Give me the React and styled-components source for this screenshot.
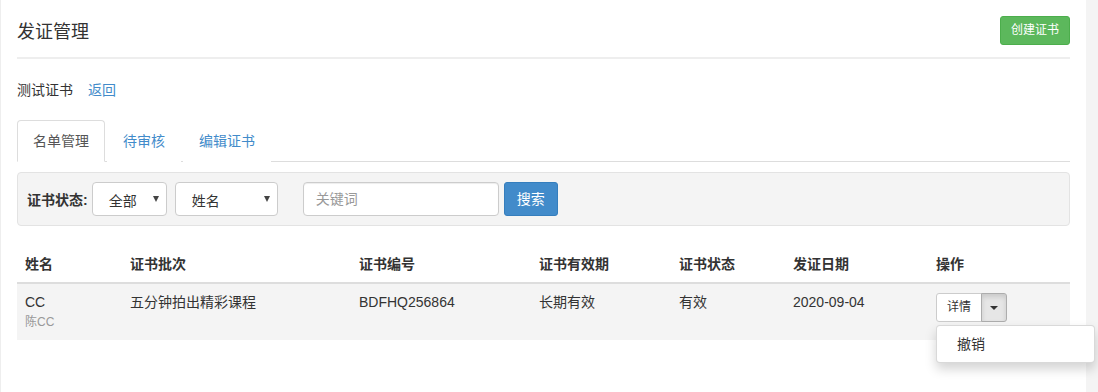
import React from "react";
import styled, { createGlobalStyle } from "styled-components";

const Global = createGlobalStyle`
  html, body {
    margin: 0;
    padding: 0;
    background: #fff;
  }
  body {
    font-family: "Liberation Sans", "Noto Sans CJK SC", sans-serif;
    font-size: 14px;
    color: #333;
  }
  * {
    box-sizing: border-box;
  }
`;

const Page = styled.div`
  display: flex;
  min-height: 392px;
  border-left: 1px solid #eee;
`;

const Main = styled.div`
  flex: 1;
  min-width: 0;
  padding: 16px 16px 0 16px;
`;

const Strip = styled.div`
  width: 12px;
  flex-shrink: 0;
  background: #f4f4f4;
`;

const Header = styled.div`
  display: flex;
  align-items: center;
  justify-content: space-between;
  padding-bottom: 12px;
  border-bottom: 2px solid #eee;
`;

const Title = styled.h1`
  margin: 0;
  padding-top: 3px;
  font-size: 18px;
  font-weight: normal;
  line-height: 26px;
  color: #333;
`;

const Button = styled.button`
  font-family: inherit;
  font-size: ${p => (p.small ? "12px" : "14px")};
  line-height: ${p => (p.small ? "17px" : "20px")};
  padding: ${p => (p.small ? "5px 10px" : "6px 12px")};
  border-radius: 3px;
  border: 1px solid ${p => p.border};
  background: ${p => p.bg};
  color: ${p => p.color};
  cursor: pointer;
`;

const Crumb = styled.div`
  margin-top: 21px;
  line-height: 20px;
  font-size: 14px;
  display: flex;
  gap: 15px;
`;

const Link = styled.a`
  color: #428bca;
  text-decoration: none;
`;

const Tabs = styled.ul`
  display: flex;
  margin: 20px 0 0;
  padding: 0;
  list-style: none;
  border-bottom: 1px solid #ddd;
`;

const Tab = styled.li`
  margin-right: 2px;
  margin-bottom: -1px;
  padding: 10px 15px;
  line-height: 20px;
  border: 1px solid ${p => (p.active ? "#ddd" : "transparent")};
  border-bottom-color: ${p => (p.active ? "#fff" : "transparent")};
  border-radius: 4px 4px 0 0;
  background: #fff;
  color: ${p => (p.active ? "#555" : "#428bca")};
  cursor: pointer;
`;

const FilterBar = styled.div`
  margin-top: 10px;
  display: flex;
  align-items: center;
  padding: 9px;
  background: #f4f4f4;
  border: 1px solid #e3e3e3;
  border-radius: 4px;
`;

const Label = styled.label`
  font-weight: bold;
  margin-right: 4px;
`;

const Select = styled.div`
  width: ${p => p.w}px;
  height: 34px;
  margin-right: ${p => p.gap}px;
  padding: 2px 7px 0 16px;
  display: flex;
  align-items: center;
  justify-content: space-between;
  background: #fff;
  border: 1px solid #ccc;
  border-radius: 4px;
  color: #333;
`;

const Arrow = styled.span`
  width: 0;
  height: 0;
  margin-top: -2px;
  border-left: 3.5px solid transparent;
  border-right: 3.5px solid transparent;
  border-top: 6px solid #444;
`;

const Input = styled.input`
  width: 196px;
  height: 34px;
  padding: 6px 12px;
  font-family: inherit;
  font-size: 14px;
  border: 1px solid #ccc;
  border-radius: 4px;
  box-shadow: inset 0 1px 1px rgba(0, 0, 0, 0.075);
  margin-right: 5px;
  &::placeholder {
    color: #999;
  }
`;

const Table = styled.table`
  margin-top: 20px;
  width: 100%;
  border-collapse: collapse;
  table-layout: fixed;
`;

const Th = styled.th`
  width: ${p => p.w}px;
  text-align: left;
  padding: 8px;
  line-height: 20px;
  font-weight: bold;
  border-bottom: 2px solid #ddd;
`;

const Td = styled.td`
  padding: 8px;
  vertical-align: top;
  line-height: 20px;
  background: #f4f4f4;
`;

const Sub = styled.div`
  font-size: 12px;
  color: #999;
`;

const Group = styled.div`
  position: relative;
  display: inline-flex;
  margin-top: 1px;
`;

const GroupBtn = styled.button`
  font-family: inherit;
  font-size: 12px;
  line-height: 17px;
  padding: 5px ${p => (p.toggle ? "8px" : "10px")};
  border: 1px solid ${p => (p.toggle ? "#adadad" : "#ccc")};
  background: ${p => (p.toggle ? "#e6e6e6" : "#fff")};
  color: #333;
  border-radius: ${p => (p.toggle ? "0 3px 3px 0" : "3px 0 0 3px")};
  margin-left: ${p => (p.toggle ? "-1px" : "0")};
  box-shadow: ${p => (p.toggle ? "inset 0 3px 5px rgba(0,0,0,.125)" : "none")};
  display: flex;
  align-items: center;
`;

const Caret = styled.span`
  width: 0;
  height: 0;
  border-left: 4px solid transparent;
  border-right: 4px solid transparent;
  border-top: 4px solid #333;
`;

const Menu = styled.ul`
  position: absolute;
  top: 100%;
  left: 0;
  z-index: 10;
  width: 159px;
  margin: 3px 0 0;
  padding: 5px 0;
  list-style: none;
  background: #fff;
  border: 1px solid rgba(0, 0, 0, 0.15);
  border-radius: 4px;
  box-shadow: 0 6px 12px rgba(0, 0, 0, 0.175);
`;

const MenuItem = styled.li`
  padding: 3px 20px;
  line-height: 20px;
  color: #333;
  white-space: nowrap;
`;

const columns = [
  { title: "姓名", w: 105 },
  { title: "证书批次", w: 229 },
  { title: "证书编号", w: 180 },
  { title: "证书有效期", w: 140 },
  { title: "证书状态", w: 114 },
  { title: "发证日期", w: 143 },
  { title: "操作", w: 142 }
];

const rows = [
  {
    name: "CC",
    realName: "陈CC",
    batch: "五分钟拍出精彩课程",
    code: "BDFHQ256864",
    period: "长期有效",
    status: "有效",
    date: "2020-09-04"
  }
];

export default function App() {
  return (
    <>
      <Global />
      <Page>
        <Main>
          <Header>
            <Title>发证管理</Title>
            <Button small bg="#5cb85c" border="#4cae4c" color="#fff">
              创建证书
            </Button>
          </Header>

          <Crumb>
            <span>测试证书</span>
            <Link href="#">返回</Link>
          </Crumb>

          <Tabs>
            <Tab active>名单管理</Tab>
            <Tab>待审核</Tab>
            <Tab>编辑证书</Tab>
          </Tabs>

          <FilterBar>
            <Label>证书状态:</Label>
            <Select w={75} gap={8}>
              全部
              <Arrow />
            </Select>
            <Select w={103} gap={25}>
              姓名
              <Arrow />
            </Select>
            <Input placeholder="关键词" />
            <Button bg="#428bca" border="#357ebd" color="#fff">
              搜索
            </Button>
          </FilterBar>

          <Table>
            <thead>
              <tr>
                {columns.map(c => (
                  <Th key={c.title} w={c.w}>
                    {c.title}
                  </Th>
                ))}
              </tr>
            </thead>
            <tbody>
              {rows.map(r => (
                <tr key={r.code}>
                  <Td>
                    {r.name}
                    <Sub>{r.realName}</Sub>
                  </Td>
                  <Td>{r.batch}</Td>
                  <Td>{r.code}</Td>
                  <Td>{r.period}</Td>
                  <Td>{r.status}</Td>
                  <Td>{r.date}</Td>
                  <Td>
                    <Group>
                      <GroupBtn>详情</GroupBtn>
                      <GroupBtn toggle>
                        <Caret />
                      </GroupBtn>
                      <Menu>
                        <MenuItem>撤销</MenuItem>
                      </Menu>
                    </Group>
                  </Td>
                </tr>
              ))}
            </tbody>
          </Table>
        </Main>
        <Strip />
      </Page>
    </>
  );
}
